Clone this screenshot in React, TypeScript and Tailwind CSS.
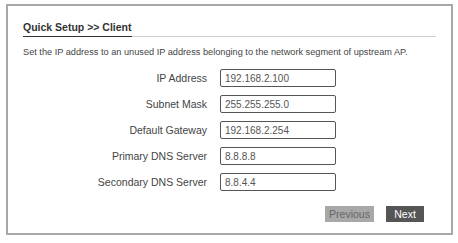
export default function App() {
  const fields = [
    { label: 'IP Address', value: '192.168.2.100' },
    { label: 'Subnet Mask', value: '255.255.255.0' },
    { label: 'Default Gateway', value: '192.168.2.254' },
    { label: 'Primary DNS Server', value: '8.8.8.8' },
    { label: 'Secondary DNS Server', value: '8.8.4.4' },
  ]

  return (
    <div
      className="w-[458px] h-[243px] bg-white pl-[6px] pt-[4px]"
      style={{ fontFamily: '"Liberation Sans", Arial, sans-serif' }}
    >
      <div className="w-[447px] h-[231px] border-2 border-[#a8a8a8] flex flex-col">
        {/* Header */}
        <div className="mx-[15px] mt-[14px] border-b border-[#cfcfcf] flex">
          <span className="text-[10.5px] font-bold text-[#333] leading-[14px] pb-[2px] border-b border-[#333] -mb-px">
            Quick Setup &gt;&gt; Client
          </span>
        </div>

        <p className="mx-[15px] mt-[9px] text-[9.2px] text-[#444] leading-[12px]">
          Set the IP address to an unused IP address belonging to the network segment of upstream AP.
        </p>

        {/* Form */}
        <div className="mt-[11px] flex flex-col gap-[8px]">
          {fields.map((f) => (
            <div key={f.label} className="flex items-center">
              <label className="w-[199px] text-right text-[10.5px] text-[#444] leading-[18px]">
                {f.label}
              </label>
              <div className="ml-[13px] w-[116px] h-[18px] border border-[#555] rounded-[2px] px-[4px] flex items-center text-[10px] text-[#555]">
                {f.value}
              </div>
            </div>
          ))}
        </div>

        {/* Buttons */}
        <div className="mt-[15px] flex justify-end gap-[12px] pr-[27px]">
          <button className="w-[49px] h-[16px] bg-[#a8a8a8] text-[#666] text-[10.5px] leading-[16px]">
            Previous
          </button>
          <button className="w-[38px] h-[16px] bg-[#555] text-white text-[10.5px] leading-[16px]">
            Next
          </button>
        </div>
      </div>
    </div>
  )
}
